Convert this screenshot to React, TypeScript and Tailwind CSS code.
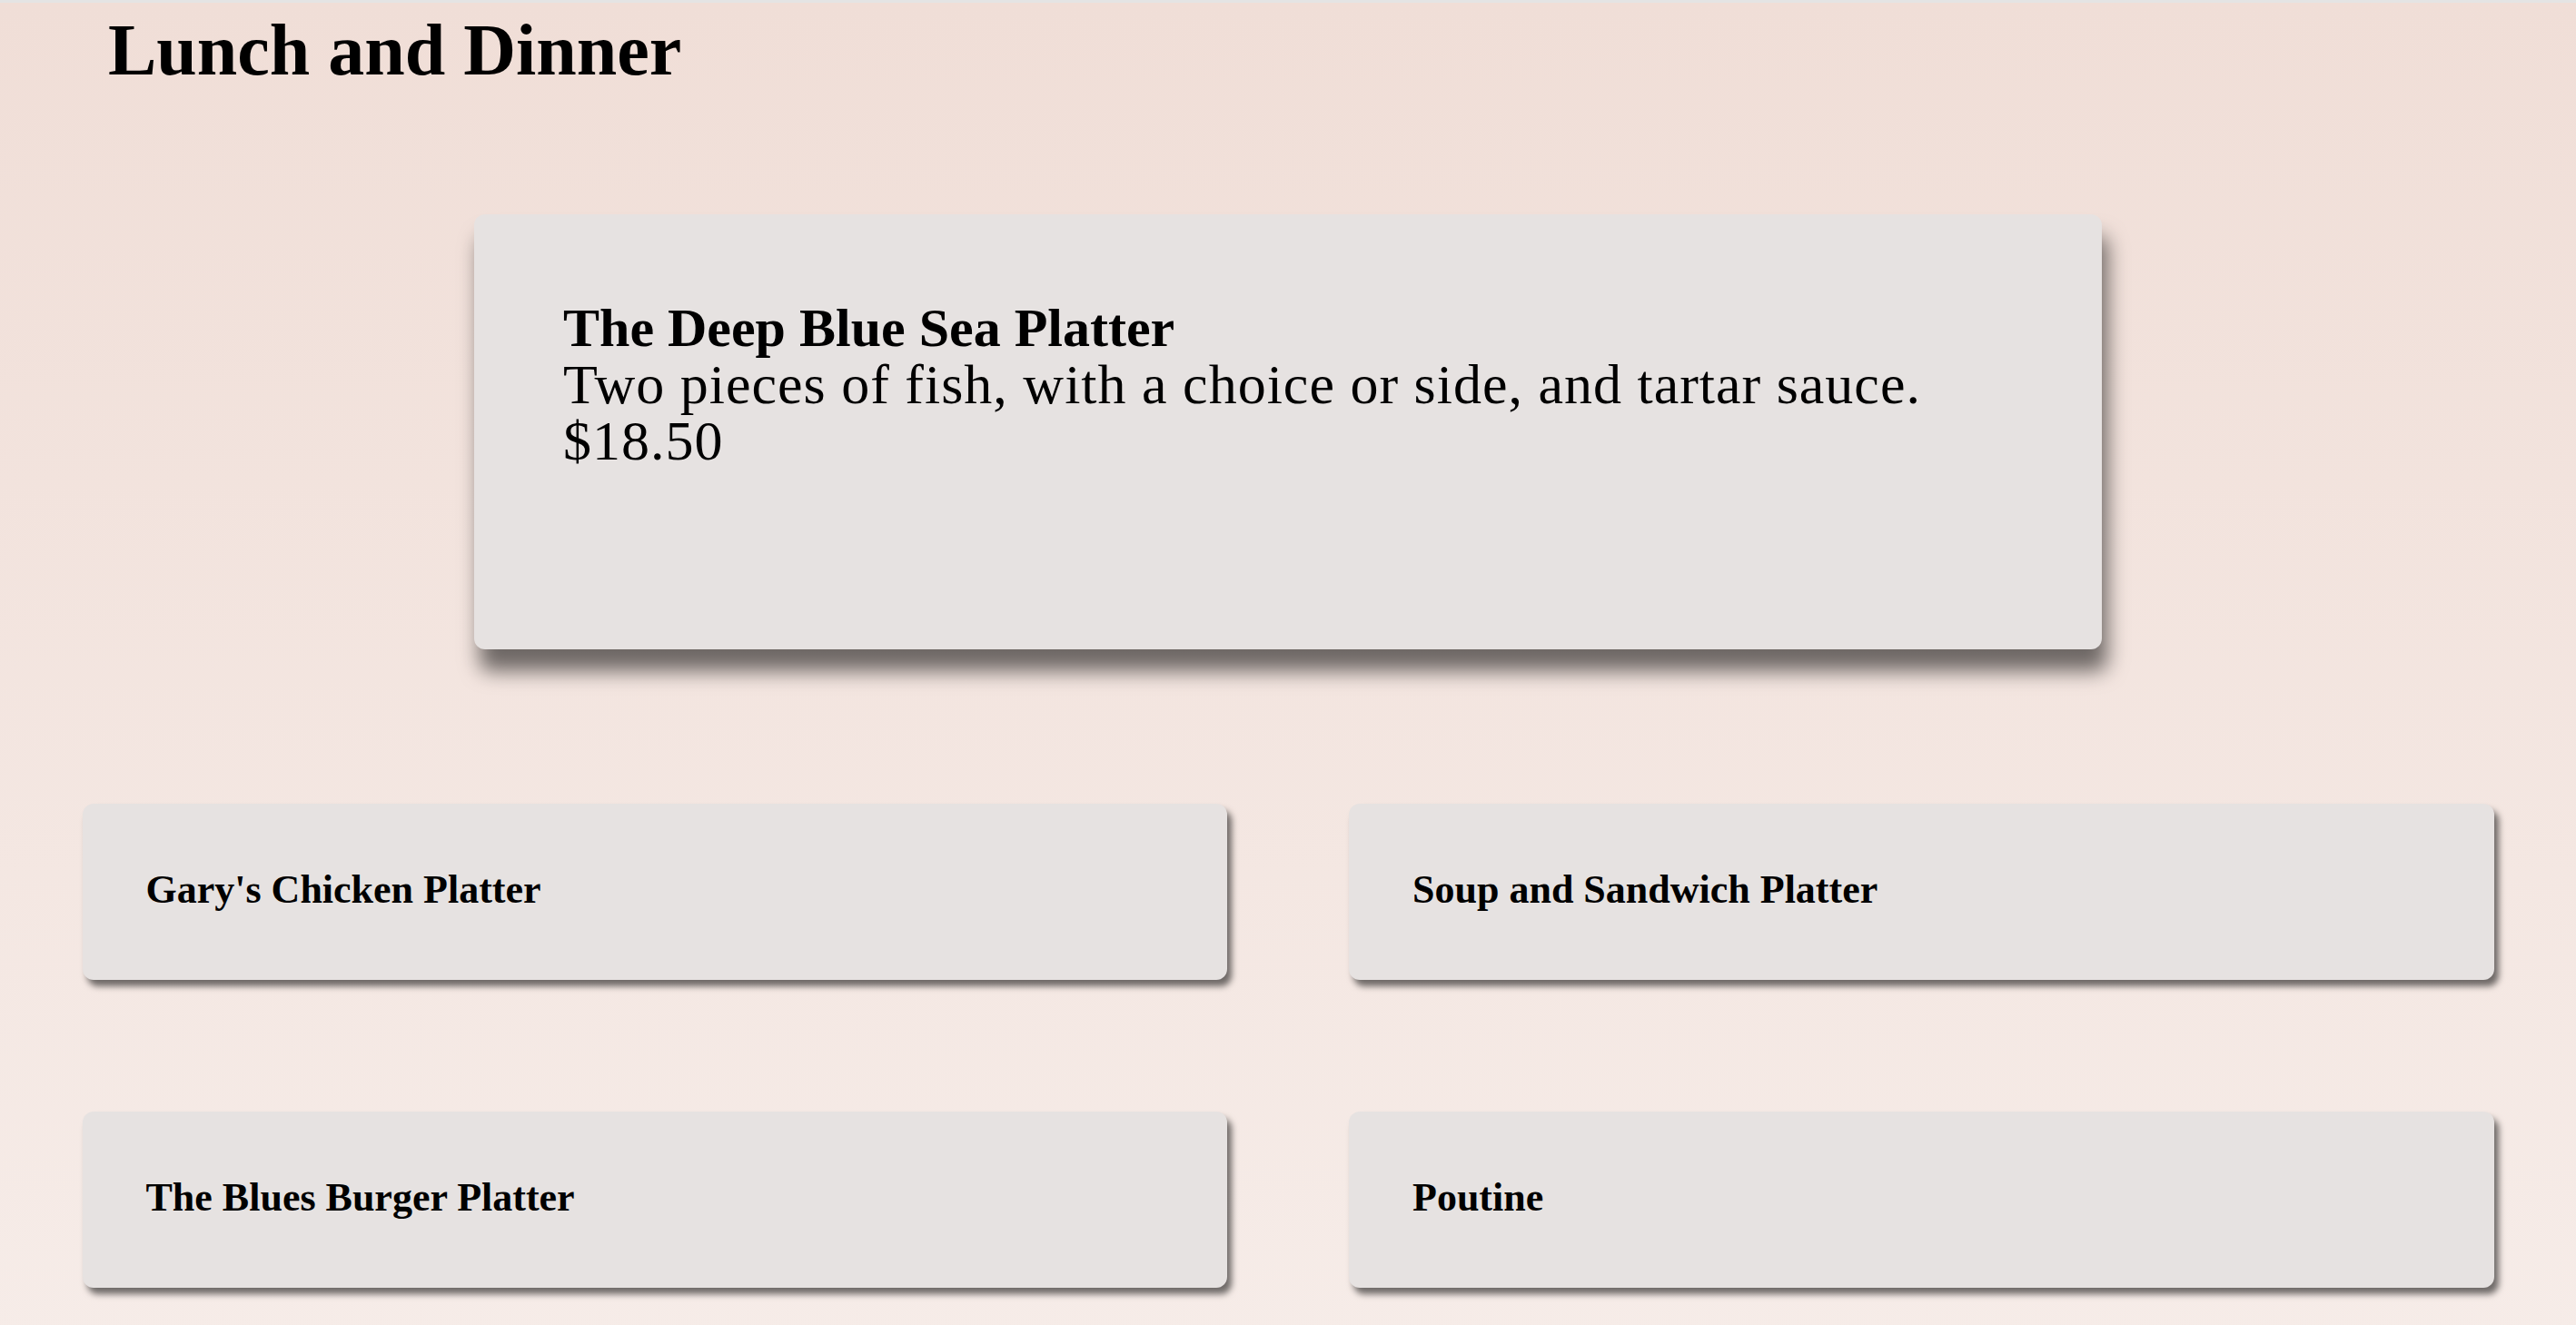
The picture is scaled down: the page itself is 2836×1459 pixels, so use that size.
const FONT = { fontFamily: '"Liberation Serif", "DejaVu Serif", serif' };

const PLATTERS = [
  "Gary's Chicken Platter",
  "Soup and Sandwich Platter",
  "The Blues Burger Platter",
  "Poutine",
] as const;

function FeaturedCard() {
  return (
    <section className="mx-auto h-[479px] w-[1792px] rounded-[12px] bg-[#e6e2e1] pl-[98px] pt-[94px] text-black shadow-[6px_24px_22px_rgba(0,0,0,0.55)]">
      <h2 className="text-[60px] font-bold leading-[62px]">The Deep Blue Sea Platter</h2>
      <p className="text-[62px] leading-[62px] tracking-[1px]">
        Two pieces of fish, with a choice or side, and tartar sauce.
      </p>
      <p className="text-[62px] leading-[62px] tracking-[1px]">$18.50</p>
    </section>
  );
}

function PlatterCard({ name }: { name: string }) {
  return (
    <div className="flex h-[194px] items-center rounded-[12px] bg-[#e6e2e1] pb-[4px] pl-[70px] shadow-[5px_7px_7px_rgba(0,0,0,0.55)]">
      <span className="text-[44px] font-bold leading-none text-black">{name}</span>
    </div>
  );
}

export default function App() {
  return (
    <div
      className="min-h-screen border-t-[3px] border-[#e4e4e4] bg-gradient-to-b from-[#f0ded7] to-[#f6ece8] pb-[60px]"
      style={FONT}
    >
      <h1 className="pl-[119px] pt-[12px] text-[80px] font-bold leading-none text-black">
        Lunch and Dinner
      </h1>

      <div className="mt-[141px]">
        <FeaturedCard />
      </div>

      <div className="mx-auto mt-[170px] grid w-[2655px] grid-cols-2 gap-x-[134px] gap-y-[145px]">
        {PLATTERS.map((name) => (
          <PlatterCard key={name} name={name} />
        ))}
      </div>
    </div>
  );
}
